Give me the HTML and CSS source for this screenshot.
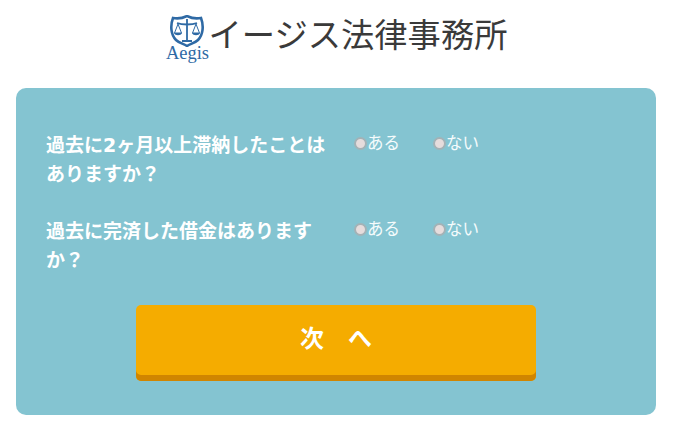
FILE: index.html
```html
<!DOCTYPE html>
<html lang="ja">
<head>
<meta charset="utf-8">
<title>イージス法律事務所</title>
<link rel="stylesheet" href="styles.css">
</head>
<body>
<header class="brand">
  <div class="logo">
    <svg class="shield" viewBox="0 0 34 32" width="34" height="32" aria-hidden="true">
      <path d="M3 3 C8 4 13 3 17 1 C21 3 26 4 31 3 C34 11 33 20 28 25 C25 28 20 29 17 31 C14 29 9 28 6 25 C1 20 0 11 3 3 Z" fill="none" stroke="#2f6aa5" stroke-width="2.6"/>
      <path d="M17 4 V25 M12 26 H22 M7 8 C12 10 22 10 27 8" fill="none" stroke="#2f6aa5" stroke-width="1.8"/>
      <path d="M8 9 L4.5 18 H11.5 Z M26 9 L22.5 18 H29.5 Z" fill="none" stroke="#2f6aa5" stroke-width="1"/>
      <path d="M4 18 C5 21 11 21 12 18 Z M22 18 C23 21 29 21 30 18 Z" fill="#2f6aa5"/>
    </svg>
    <span class="logo-text">Aegis</span>
  </div>
  <h1 class="brand-name">イージス法律事務所</h1>
</header>
<main class="panel">
  <div class="question">
    <p class="label">過去に2ヶ月以上滞納したことはありますか？</p>
    <div class="options">
      <label class="option"><span class="radio"></span>ある</label>
      <label class="option"><span class="radio"></span>ない</label>
    </div>
  </div>
  <div class="question">
    <p class="label">過去に完済した借金はありますか？</p>
    <div class="options">
      <label class="option"><span class="radio"></span>ある</label>
      <label class="option"><span class="radio"></span>ない</label>
    </div>
  </div>
  <div class="actions"><button class="next" type="button">次　へ</button></div>
</main>
</body>
</html>
```
FILE: styles.css
```css
* { box-sizing: border-box; }
html, body { margin: 0; padding: 0; }
body {
  width: 673px;
  height: 428px;
  overflow: hidden;
  background: #fff;
  font-family: "DejaVu Sans", "Noto Sans CJK JP", sans-serif;
}
.brand {
  display: flex;
  justify-content: center;
  align-items: flex-start;
  height: 88px;
  padding: 12px 0 0;
}
.logo {
  width: 44px;
  height: 50px;
  display: flex;
  flex-direction: column;
  align-items: center;
}
.shield { display: block; margin-top: 3px; }
.logo-text {
  margin-top: -2px;
  font-family: "Liberation Serif", serif;
  font-size: 18.5px;
  line-height: 16px;
  color: #2f6aa5;
}
.brand-name {
  margin: 0 0 0 -1px;
  font-family: "Noto Sans CJK JP", sans-serif;
  font-weight: 400;
  font-size: 33.3px;
  line-height: 42px;
  color: #3a3a3a;
  white-space: nowrap;
}
.panel {
  margin: 0 17px 0 16px;
  height: 327px;
  padding: 43px 30px 0;
  background: #84c4d1;
  border-radius: 10px;
  color: #fff;
}
.question {
  display: flex;
  align-items: flex-start;
  height: 86px;
}
.label {
  margin: 0;
  width: 282px;
  font-size: 19px;
  font-weight: 700;
  line-height: 29px;
}
.options {
  display: flex;
  margin: -1px 0 0 26px;
  font-size: 16.5px;
  line-height: 28px;
  color: #f4fbfc;
}
.option { display: flex; align-items: center; width: 79px; height: 28px; }
.radio {
  width: 13px;
  height: 13px;
  border-radius: 50%;
  background: #e6dcdc;
  border: 2px solid #a3b2b6;
  margin-bottom: 1px;
}
.actions { display: flex; justify-content: center; margin-top: 2px; }
.next {
  width: 400px;
  height: 76px;
  padding: 0 0 14px;
  border: 0;
  border-radius: 5px;
  background: #f5ac00;
  box-shadow: inset 0 -6px 0 #d08500;
  color: #fff;
  font-family: "DejaVu Sans", "Noto Sans CJK JP", sans-serif;
  font-size: 24px;
  font-weight: 700;
}
```
